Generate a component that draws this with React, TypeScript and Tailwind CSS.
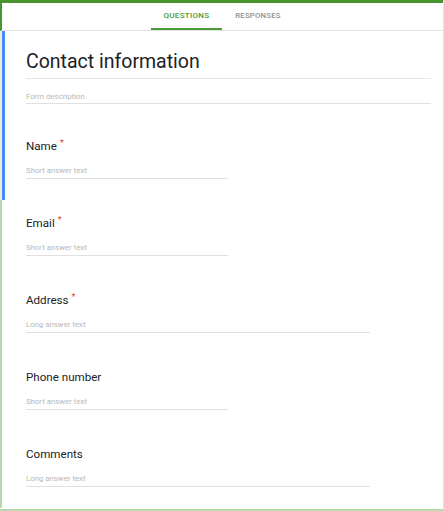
import React from 'react';

type Question = {
  label: string;
  required?: boolean;
  long?: boolean;
};

const questions: Question[] = [
  { label: 'Email', required: true },
  { label: 'Address', required: true, long: true },
  { label: 'Phone number' },
  { label: 'Comments', long: true },
];

function QuestionBlock({ q, inset }: { q: Question; inset?: boolean }) {
  return (
    <div className={inset ? 'h-[77px] pt-[15px] pl-[21px]' : 'h-[77px] pt-[15px] pl-[24px]'}>
      <div className="text-[11.6px] leading-[16px] text-[#202124]">
        {q.label}
        {q.required && <span className="relative top-[1px] ml-[3px] align-top text-[9px] leading-[9px] text-[#db4437]">*</span>}
      </div>
      <div
        className={
          q.long
            ? 'mt-[12px] w-[344px] border-b border-[#e0e0e0] pb-[2px] text-[7.8px] leading-[10px] text-[#b8b8b8]'
            : 'mt-[12px] w-[202px] border-b border-[#e0e0e0] pb-[2px] text-[7.8px] leading-[10px] text-[#b8b8b8]'
        }
      >
        {q.long ? 'Long answer text' : 'Short answer text'}
      </div>
    </div>
  );
}

export default function App() {
  return (
    <div className="flex h-[511px] w-[444px] flex-col border-r border-b-2 border-r-[#dbe9d5] border-b-[#b9d9ad] bg-white font-['Roboto',sans-serif]">
      {/* tabs */}
      <div className="flex h-[31px] shrink-0 justify-center border-t-[3px] border-l-2 border-b border-t-[#48952f] border-l-[#48952f] border-b-[#e3e3e3]">
        <div className="flex h-full w-[71px] items-center justify-center border-b-2 border-[#4b9a3c] pt-[1px] text-[8px] font-medium tracking-[0.3px] text-[#4b9a3c]">
          QUESTIONS
        </div>
        <div className="flex h-full w-[72px] items-center justify-center pb-[1px] text-[7.8px] font-medium tracking-[0.2px] text-[#8f8f8f]">
          RESPONSES
        </div>
      </div>

      <div className="flex-1">
        <div className="border-l-2 border-[#e4eee0]">
          <div className="border-l-[3px] border-[#4a8af4]">
            <div className="h-[92px] pt-[18px] pl-[21px] pr-[12px]">
              <div className="border-b border-[#e6e6e6] pb-[3px] text-[19.5px] leading-[26px] text-[#202124]">
                Contact information
              </div>
              <div className="mt-[13px] border-b border-[#e0e0e0] pb-[1px] text-[7.8px] leading-[10px] text-[#b8b8b8]">
                Form description
              </div>
            </div>
            <QuestionBlock q={{ label: 'Name', required: true }} inset />
          </div>
        </div>
        <div className="border-l-2 border-[#b9d9ad]">
          {questions.map((q) => (
            <QuestionBlock key={q.label} q={q} />
          ))}
        </div>
      </div>
    </div>
  );
}
